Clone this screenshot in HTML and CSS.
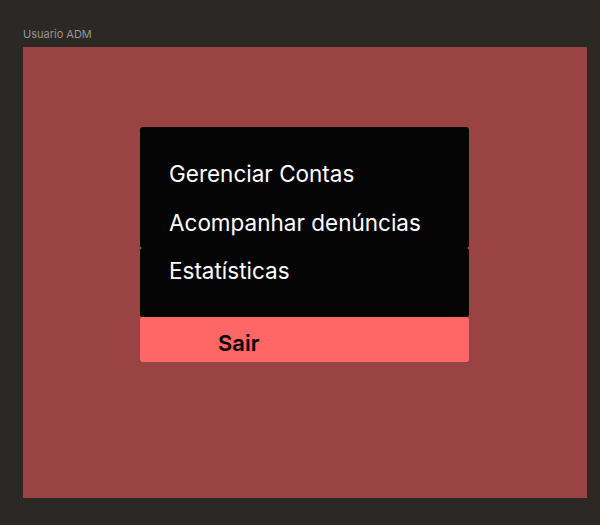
FILE: index.html
```html
<!DOCTYPE html>
<html lang="pt">
<head>
<meta charset="utf-8">
<title>Usuario ADM</title>
<link rel="stylesheet" href="styles.css">
</head>
<body>
<div class="label">Usuario ADM</div>
<div class="frame">
  <div class="menu">
    <div class="box box-top">
      <div class="item">Gerenciar Contas</div>
      <div class="item">Acompanhar denúncias</div>
    </div>
    <div class="box box-mid">
      <div class="item">Estatísticas</div>
    </div>
    <div class="box box-exit">
      <div class="exit">Sair</div>
    </div>
  </div>
</div>
</body>
</html>
```
FILE: styles.css
```css
html, body {
  margin: 0;
  padding: 0;
  background: #2c2826;
  width: 600px;
  height: 525px;
  overflow: hidden;
  font-family: Inter, "Noto Sans", sans-serif;
}
.label {
  padding: 27px 0 0 23px;
  height: 20px;
  font-size: 11px;
  line-height: 14px;
  color: #9a9696;
}
.frame {
  margin-left: 23px;
  width: 564px;
  height: 451px;
  background: #994442;
  padding: 80px 0 0 117px;
  box-sizing: border-box;
}
.menu {
  width: 329px;
  display: flex;
  flex-direction: column;
}
.box {
  background: #050505;
  border-radius: 3px;
  box-sizing: border-box;
  padding-left: 29px;
}
.box-top {
  height: 121px;
  padding-top: 33px;
  display: flex;
  flex-direction: column;
  gap: 21px;
}
.box-mid {
  height: 69px;
  padding-top: 9px;
}
.box-exit {
  height: 45px;
  padding-top: 12px;
  padding-left: 78px;
  background: #ff6666;
}
.item {
  color: #ffffff;
  font-size: 22.5px;
  line-height: 28px;
  font-weight: 400;
}
.exit {
  color: #000000;
  font-size: 22px;
  line-height: 28px;
  font-weight: 600;
}
```
